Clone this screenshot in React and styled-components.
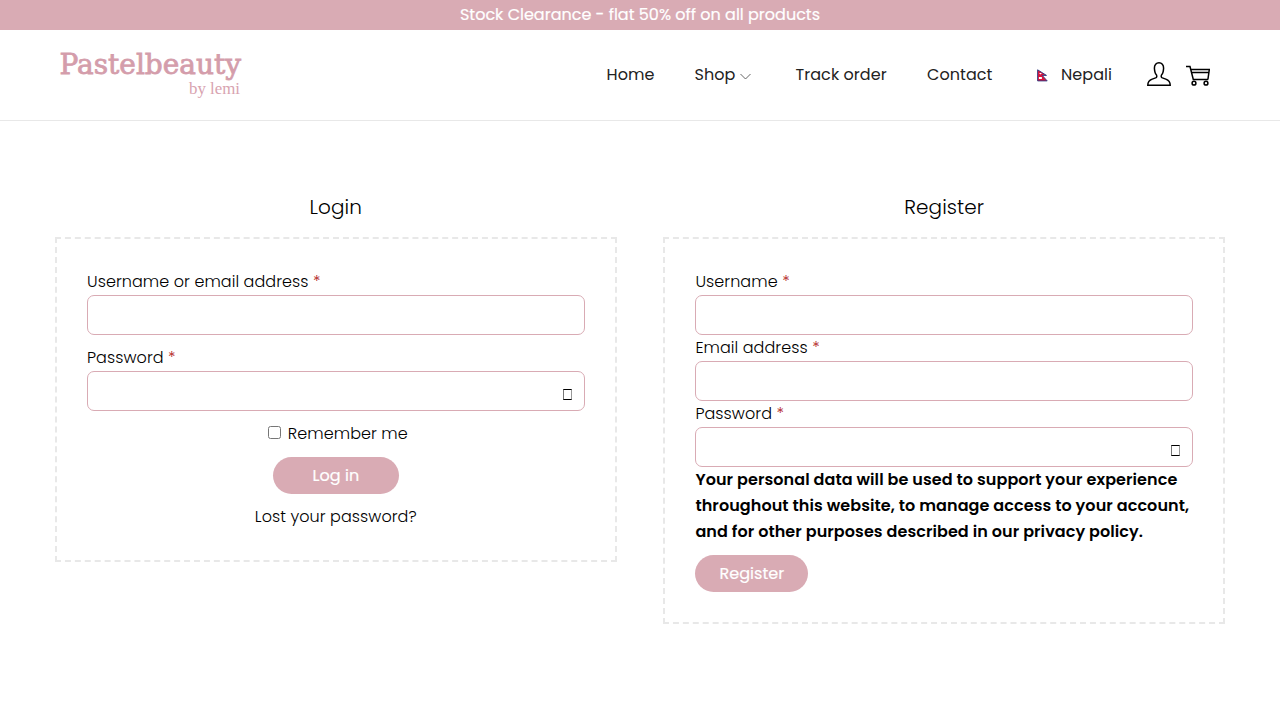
import React from "react";
import styled, { createGlobalStyle } from "styled-components";

const GlobalStyle = createGlobalStyle`
  * { box-sizing: border-box; }
  body {
    margin: 0;
    background: #fff;
    color: #000;
    font: 300 16px/26px "Poppins", "Inter", sans-serif;
  }
  p, h2 { margin: 0; }
`;

const Page = styled.div`
  height: 720px;
  overflow: hidden;
`;

const Announcement = styled.div`
  height: 30px;
  background: #d9abb4;
  color: #fff;
  text-align: center;
  font-weight: 400;
  line-height: 30px;
  -webkit-text-stroke: 0.2px #fff;
`;

const Header = styled.header`
  display: flex;
  align-items: center;
  justify-content: space-between;
  height: 91px;
  padding: 0 70px 0 55px;
  border-bottom: 1px solid #e8e8e8;
`;

const Logo = styled.svg`
  display: block;
  width: 190px;
  height: 60px;
`;

const HeaderRight = styled.div`
  display: flex;
  align-items: center;
`;

const Nav = styled.nav`
  display: flex;
  align-items: center;
  font-weight: 400;
  letter-spacing: 0.06px;
  color: #222;
`;

const NavItem = styled.a`
  display: flex;
  align-items: center;
  width: ${(p) => p.$w}px;
  color: inherit;
`;

const Chevron = styled.svg`
  width: 11px;
  height: 7px;
  margin: 2px 0 0 5px;
`;

const Flag = styled.svg`
  width: 11px;
  height: 13px;
  margin-right: 13px;
`;

const HeaderIcon = styled.svg`
  display: block;
  width: 24px;
  height: 24px;
  margin: 0 0 2px ${(p) => p.$gap || 0}px;
  fill: none;
  stroke: #000;
  stroke-width: 1.5;
`;

const Columns = styled.main`
  display: grid;
  grid-template-columns: 48% 48%;
  justify-content: space-between;
  align-items: start;
  padding: 73px 55px 0;
  letter-spacing: 0.07px;
`;

const Title = styled.h2`
  height: 43px;
  font-size: 20px;
  font-weight: 300;
  line-height: 27px;
  text-align: center;
`;

const Form = styled.form`
  display: flex;
  flex-direction: column;
  align-items: ${(p) => (p.$centered ? "center" : "flex-start")};
  gap: ${(p) => p.$gap || 0}px;
  padding: 30px;
  border: 2px dashed #e8e8e8;
`;

const Field = styled.label`
  display: block;
  position: relative;
  width: 100%;
`;

const Required = styled.span`
  color: #b22222;
`;

const Input = styled.input`
  display: block;
  width: 100%;
  height: 40px;
  border: 1px solid #d9abb4;
  border-radius: 7px;
  background: #fff;
  outline: none;
`;

const Reveal = styled.span`
  position: absolute;
  right: 13px;
  bottom: 11px;
  width: 9px;
  height: 11px;
  border: solid #000;
  border-width: 1px;
  border-left-color: #777;
  border-right-color: #999;
`;

const Remember = styled.label`
  display: flex;
  align-items: center;
  height: 26px;
  margin-left: 4px;
`;

const Checkbox = styled.input`
  width: 13px;
  height: 13px;
  margin: 0 7px 3px 0;
`;

const Button = styled.button`
  width: ${(p) => p.$w}px;
  height: 37px;
  padding: 0;
  margin-top: ${(p) => p.$top || 0}px;
  border: 0;
  border-radius: 19px;
  background: #d9abb4;
  color: #fff;
  font: inherit;
  font-weight: 400;
  letter-spacing: 0.06px;
  -webkit-text-stroke: 0.2px #fff;
`;

const Privacy = styled.p`
  font-weight: 600;
  letter-spacing: 0.08px;
`;

function InputField({ label, type = "text" }) {
  return (
    <Field>
      {label} <Required>*</Required>
      <Input type={type} />
      {type === "password" && <Reveal />}
    </Field>
  );
}

export default function App() {
  return (
    <Page>
      <GlobalStyle />
      <Announcement>Stock Clearance - flat 50% off on all products</Announcement>

      <Header>
        <Logo viewBox="0 0 190 60">
          <text x="4.5" y="29" fontFamily="DejaVu Serif" fontSize="27.5" fill="#d49dab" stroke="#d49dab" strokeWidth="0.8" textLength="181.5" lengthAdjust="spacingAndGlyphs">Pastelbeauty</text>
          <text x="134" y="49" fontFamily="Liberation Serif" fontSize="17" fill="#d8a3b0" textLength="51" lengthAdjust="spacingAndGlyphs">by lemi</text>
        </Logo>
        <HeaderRight>
          <Nav>
            <NavItem $w={88}>Home</NavItem>
            <NavItem $w={101}>
              Shop
              <Chevron viewBox="0 0 11 7" fill="none" stroke="#555" strokeWidth="0.9">
                <path d="M.5 1 5.5 6 10.5 1" />
              </Chevron>
            </NavItem>
            <NavItem $w={131.5}>Track order</NavItem>
            <NavItem $w={110}>Contact</NavItem>
            <NavItem $w={110}>
              <Flag viewBox="0 0 11 13">
                <path d="M.6.8 9.5 6.4H5.2l5 5.5H.6Z" fill="#dc143c" stroke="#263a83" strokeWidth="0.9" />
                <path d="M2 3.9h2.9L3.5 5.6ZM1.9 8h3v2h-3Z" fill="#fff" />
              </Flag>
              Nepali
            </NavItem>
          </Nav>
          <HeaderIcon viewBox="0 0 24 24">
            <path d="M.8 23.2H23.2C23.2 19.8 22 18.3 18.8 17.1L15.4 15.9C14.2 15.4 13.9 14.2 14.5 13C15.9 11.6 16.4 9.6 16.6 6.2C16.7 2.7 14.7.8 12 .8S7.3 2.7 7.4 6.2C7.6 9.6 8.1 11.6 9.5 13C10.1 14.2 9.8 15.4 8.6 15.9L5.2 17.1C2 18.3.8 19.8.8 23.2Z" />
          </HeaderIcon>
          <HeaderIcon $gap={15} viewBox="0 0 24 24">
            <path d="M0 4.5H4L7.3 17.5H22.2M4.7 7.5H23.3L21.9 17.5M5.5 10.5H22.8" />
            <circle cx="8" cy="21.2" r="1.9" />
            <circle cx="20" cy="21.2" r="1.9" />
          </HeaderIcon>
        </HeaderRight>
      </Header>

      <Columns>
        <section>
          <Title>Login</Title>
          <Form $centered $gap={10}>
            <InputField label="Username or email address" />
            <InputField label="Password" type="password" />
            <Remember>
              <Checkbox type="checkbox" />
              Remember me
            </Remember>
            <Button type="button" $w={126}>Log in</Button>
            <span>Lost your password?</span>
          </Form>
        </section>

        <section>
          <Title>Register</Title>
          <Form>
            <InputField label="Username" />
            <InputField label="Email address" />
            <InputField label="Password" type="password" />
            <Privacy>
              Your personal data will be used to support your experience throughout this website,
              to manage access to your account, and for other purposes described in our privacy policy.
            </Privacy>
            <Button type="button" $w={113} $top={10}>Register</Button>
          </Form>
        </section>
      </Columns>
    </Page>
  );
}
